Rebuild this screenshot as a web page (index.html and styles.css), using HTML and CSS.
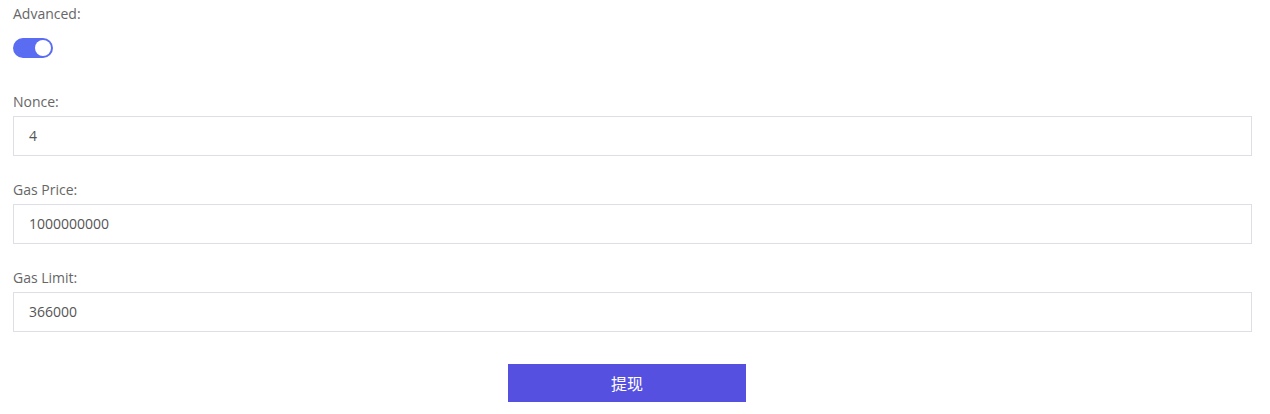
FILE: index.html
```html
<!DOCTYPE html>
<html>
<head>
<meta charset="utf-8">
<link rel="stylesheet" href="styles.css">
</head>
<body>
<form class="form">
  <div class="item">
    <div class="label">Advanced:</div>
    <div class="control">
      <span class="switch"><span class="knob"></span></span>
    </div>
  </div>
  <div class="item">
    <div class="label">Nonce:</div>
    <div class="input">4</div>
  </div>
  <div class="item">
    <div class="label">Gas Price:</div>
    <div class="input">1000000000</div>
  </div>
  <div class="item">
    <div class="label">Gas Limit:</div>
    <div class="input">366000</div>
  </div>
  <div class="actions">
    <button type="button" class="btn">提现</button>
  </div>
</form>
</body>
</html>
```
FILE: styles.css
```css
html, body {
  margin: 0;
  padding: 0;
  background: #fff;
}
body {
  font-family: "Open Sans", "Noto Sans CJK SC", sans-serif;
  font-size: 14px;
  color: #606266;
}
.form {
  padding: 0 18px 0 13px;
}
.item {
  margin-bottom: 20px;
}
.label {
  height: 28px;
  line-height: 28px;
  color: #666;
}
.control {
  height: 40px;
  display: flex;
  align-items: center;
}
.switch {
  width: 40px;
  height: 20px;
  border-radius: 10px;
  background: #5a6cf1;
  display: flex;
  align-items: center;
  justify-content: flex-end;
  padding: 0 2px;
  box-sizing: border-box;
}
.knob {
  width: 16px;
  height: 16px;
  border-radius: 50%;
  background: #fff;
}
.input {
  height: 40px;
  box-sizing: border-box;
  border: 1px solid #dcdfe6;
  padding: 0 15px;
  line-height: 38px;
  color: #555;
}
.actions {
  display: flex;
  justify-content: center;
  padding-top: 12px;
  padding-right: 11px;
}
.btn {
  width: 238px;
  height: 38px;
  border: none;
  background: #5650e0;
  color: #fff;
  font-family: "Noto Sans CJK SC", sans-serif;
  font-size: 16px;
  padding: 0;
}
```
